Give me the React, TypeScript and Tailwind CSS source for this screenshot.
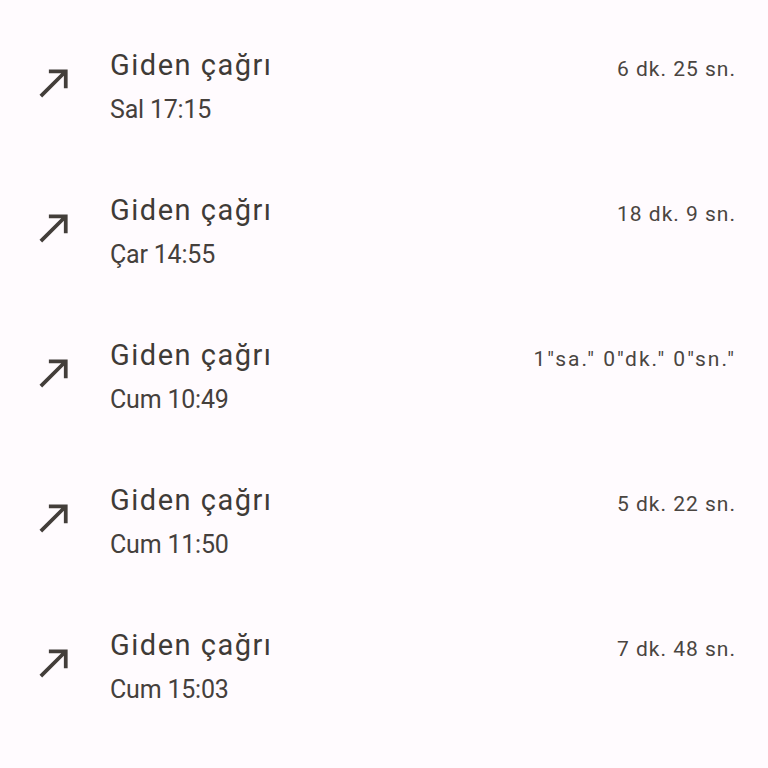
const calls = [
  { day: "Sal 17:15", duration: "6 dk. 25 sn.", wide: false },
  { day: "Çar 14:55", duration: "18 dk. 9 sn.", wide: false },
  { day: "Cum 10:49", duration: "1\"sa.\" 0\"dk.\" 0\"sn.\"", wide: true },
  { day: "Cum 11:50", duration: "5 dk. 22 sn.", wide: false },
  { day: "Cum 15:03", duration: "7 dk. 48 sn.", wide: false },
];

const CallMadeIcon = () => (
  <svg viewBox="0 0 24 24" className="w-[45px] h-[45px]" fill="#433e3a">
    <path d="M9 5v2h6.59L4 18.59 5.41 20 17 8.41V15h2V5z" />
  </svg>
);

export default function App() {
  return (
    <div className="w-[768px] h-[768px] bg-[#fffbfe] overflow-hidden font-['Roboto',sans-serif]">
      {calls.map((call, i) => (
        <div key={i} className="h-[145px] flex items-start pt-[47px]">
          <div className="w-[110px] pl-[32px] pt-[13px]">
            <CallMadeIcon />
          </div>
          <div className="flex-1 flex flex-col">
            <div className="text-[29px] leading-[36px] tracking-[1.5px] text-[#3f3b37]">Giden çağrı</div>
            <div className="text-[25px] leading-[30px] tracking-[-0.2px] text-[#45403c] mt-[12px]">
              {call.day}
            </div>
          </div>
          <div
            className={
              call.wide
                ? "pr-[32px] mt-[8px] text-[21px] leading-[28px] tracking-[2px] text-[#4a4541]"
                : "pr-[32px] mt-[8px] text-[21px] leading-[28px] tracking-[1px] text-[#4a4541]"
            }
          >
            {call.duration}
          </div>
        </div>
      ))}
    </div>
  );
}
